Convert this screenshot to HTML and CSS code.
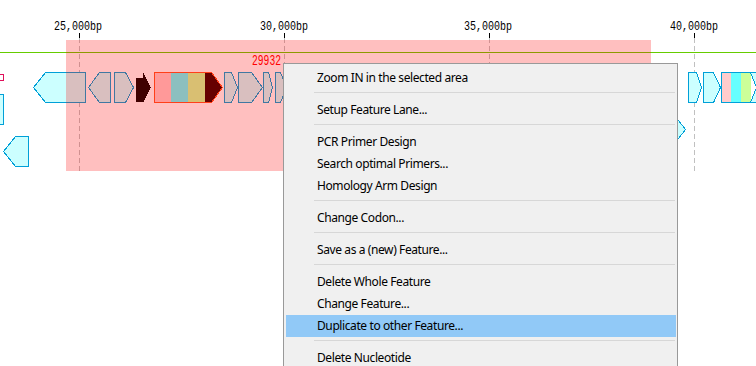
FILE: index.html
```html
<!DOCTYPE html>
<html lang="en">
<head>
    <meta charset="UTF-8">
    <title>Feature Map</title>
    <link rel="stylesheet" href="styles.css">
</head>
<body>
    <div class="map">
        <svg class="map-canvas" width="756" height="366" viewBox="0 0 756 366">
            <!-- ruler -->
            <text class="ruler-label" x="54" y="30" textLength="48" lengthAdjust="spacingAndGlyphs">25,000bp</text>
            <text class="ruler-label" x="260" y="30" textLength="48" lengthAdjust="spacingAndGlyphs">30,000bp</text>
            <text class="ruler-label" x="464" y="30" textLength="48" lengthAdjust="spacingAndGlyphs">35,000bp</text>
            <text class="ruler-label" x="670" y="30" textLength="48" lengthAdjust="spacingAndGlyphs">40,000bp</text>
            <path class="grid" d="M79.5 38V171 M284.5 38V171 M489.5 38V171 M694.5 38V171"/>
            <path class="tick" d="M79.5 33v5 M284.5 33v5 M489.5 33v5 M694.5 33v5"/>
            <line class="seq-line" x1="0" y1="52.5" x2="756" y2="52.5"/>

            <!-- lane 1 -->
            <rect class="feat-mark" x="-5.5" y="74.5" width="9" height="6"/>
            <polygon class="feat" points="33.5,87.5 45.5,72.5 85.5,72.5 85.5,102.5 45.5,102.5"/>
            <polygon class="feat" points="88.5,87.5 99.5,72.5 110.5,72.5 110.5,102.5 99.5,102.5"/>
            <polygon class="feat" points="114.5,72.5 125.5,72.5 133.5,87.5 125.5,102.5 114.5,102.5"/>
            <polygon class="feat-dark" points="136,78 143,78 143,72 151,87.5 143,103 143,102 136,102"/>
            <rect class="seg-pink" x="154" y="72" width="17" height="31"/>
            <rect class="seg-cyan" x="171" y="72" width="17" height="31"/>
            <rect class="seg-green" x="188" y="72" width="17" height="31"/>
            <polygon class="seg-dark" points="205,72 212,72 223,87.5 212,103 205,103"/>
            <polygon class="feat-outline" points="154.5,72.5 211.5,72.5 222.5,87.5 211.5,102.5 154.5,102.5"/>
            <polygon class="feat" points="224.5,72.5 231.5,72.5 237.5,87.5 231.5,102.5 224.5,102.5"/>
            <polygon class="feat" points="238.5,72.5 251.5,72.5 262.5,87.5 251.5,102.5 238.5,102.5"/>
            <polygon class="feat" points="263.5,72.5 268.5,72.5 272.5,87.5 268.5,102.5 263.5,102.5"/>
            <polygon class="feat" points="275.5,72.5 280.5,72.5 286.5,87.5 280.5,102.5 275.5,102.5"/>
            <polygon class="feat" points="688.5,72.5 696.5,72.5 701.5,87.5 696.5,102.5 688.5,102.5"/>
            <polygon class="feat" points="703.5,72.5 713.5,72.5 720.5,87.5 713.5,102.5 703.5,102.5"/>
            <rect class="seg-pink" x="721" y="72" width="10" height="31"/>
            <rect class="seg-cyan" x="731" y="72" width="10" height="31"/>
            <rect class="seg-green" x="741" y="72" width="10" height="31"/>
            <polygon class="feat" points="750.5,72.5 760,72.5 760,102.5 750.5,102.5 756.5,87.5"/>
            <path class="feat-outline blue" d="M760 72.5H721.5V102.5H760"/>

            <!-- lane 2 -->
            <rect class="feat" x="-10.5" y="94.5" width="14" height="30"/>
            <polygon class="feat" points="660,120.5 678.5,120.5 685.5,129.5 678.5,138.5 660,138.5"/>

            <!-- lane 3 -->
            <polygon class="feat" points="3.5,151.5 15.5,136.5 28.5,136.5 28.5,166.5 15.5,166.5"/>

            <!-- selection -->
            <rect class="selection" x="66" y="40" width="585" height="131"/>
            <text class="sel-pos" x="252" y="65" textLength="29" lengthAdjust="spacingAndGlyphs">29932</text>
        </svg>

        <div class="ctx-menu">
            <div class="menu-item">Zoom IN in the selected area</div>
            <div class="menu-sep"></div>
            <div class="menu-item">Setup Feature Lane...</div>
            <div class="menu-sep"></div>
            <div class="menu-item">PCR Primer Design</div>
            <div class="menu-item">Search optimal Primers...</div>
            <div class="menu-item">Homology Arm Design</div>
            <div class="menu-sep"></div>
            <div class="menu-item">Change Codon...</div>
            <div class="menu-sep"></div>
            <div class="menu-item">Save as a (new) Feature...</div>
            <div class="menu-sep"></div>
            <div class="menu-item">Delete Whole Feature</div>
            <div class="menu-item">Change Feature...</div>
            <div class="menu-item active">Duplicate to other Feature...</div>
            <div class="menu-sep"></div>
            <div class="menu-item">Delete Nucleotide</div>
        </div>
    </div>
</body>
</html>
```

FILE: styles.css
```css
body {
    margin: 0;
    background: #fff;
    overflow: hidden;
}
.map {
    position: relative;
    width: 756px;
    height: 366px;
    overflow: hidden;
}
.map-canvas {
    display: block;
    shape-rendering: crispEdges;
}
.ruler-label {
    font-family: "Liberation Mono", monospace;
    font-size: 12px;
    fill: #000;
}
.sel-pos {
    font-family: "Liberation Mono", monospace;
    font-size: 15px;
    fill: #ff0000;
}
.tick {
    stroke: #000;
    stroke-width: 1;
}
.grid {
    stroke: #c0c0c0;
    stroke-width: 1;
    stroke-dasharray: 5 3;
}
.seq-line {
    stroke: #66cc00;
    stroke-width: 1;
}
.feat {
    fill: #ccffff;
    stroke: #00a0d8;
    stroke-width: 1;
}
.feat-mark {
    fill: #fff;
    stroke: #e0105a;
    stroke-width: 1;
}
.feat-dark {
    fill: #000;
}
.feat-outline {
    fill: none;
    stroke: #ff5522;
    stroke-width: 1;
}
.feat-outline.blue {
    stroke: #00a0d8;
}
.seg-pink { fill: #ffcccc; }
.seg-cyan { fill: #66ffff; }
.seg-green { fill: #ccff99; }
.seg-dark { fill: #330000; }
.selection {
    fill: rgba(255, 0, 0, 0.25);
}
.ctx-menu {
    position: absolute;
    left: 283px;
    top: 63px;
    width: 395px;
    box-sizing: border-box;
    padding: 3px 1px 10px 2px;
    background: #f0f0f0;
    border: 1px solid #999;
    font-family: "Noto Sans", sans-serif;
    font-size: 12px;
    letter-spacing: -0.4px;
    color: #000;
}
.menu-item {
    height: 22px;
    line-height: 22px;
    padding-left: 31px;
    white-space: nowrap;
}
.menu-item.active {
    background: #91c9f7;
}
.menu-sep {
    height: 1px;
    margin: 3px 1px 6px 28px;
    background: #d7d7d7;
}
```
